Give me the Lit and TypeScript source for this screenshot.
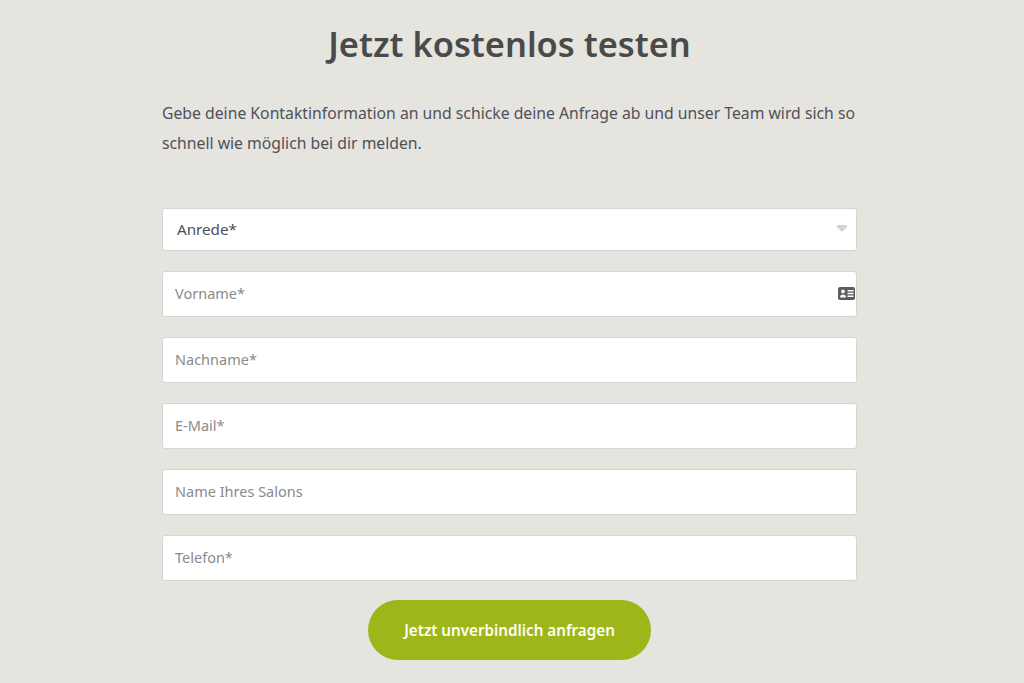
import { LitElement, html, css, svg } from 'lit'
import { customElement } from 'lit/decorators.js'

const FIELDS = ['Vorname*', 'Nachname*', 'E-Mail*', 'Name Ihres Salons', 'Telefon*']

const cardIcon = svg`<path fill="#5c5c5c" fill-rule="evenodd" d="M2 0h13a2 2 0 0 1 2 2v9a2 2 0 0 1-2 2H2a2 2 0 0 1-2-2V2a2 2 0 0 1 2-2ZM5 2.500a1.900 1.900 0 1 0 0 3.800 1.900 1.900 0 0 0 0-3.800ZM2 10.500h6c0-1.700-1.200-3-3-3s-3 1.300-3 3ZM9.500 3v1.500h6V3h-6Zm0 2.800v1.500h6V5.800h-6Zm0 2.800v1.500h6V8.600h-6Z"/>`

@customElement('app-root')
export class AppRoot extends LitElement {
  static styles = css`
    :host {
      display: block;
      min-height: 683px;
      background: #e5e4df;
      font-family: 'Noto Sans', 'Open Sans', sans-serif;
      overflow: hidden;
    }

    .page {
      width: 695px;
      margin-left: 162px;
      padding-top: 21px;
    }

    h1 {
      margin: 0;
      font-size: 34.400px;
      line-height: 46px;
      font-weight: 600;
      color: #4a4a4a;
      text-align: center;
      white-space: nowrap;
    }

    .intro {
      margin: 31px 0 0;
      font-size: 15.750px;
      line-height: 30px;
      color: #50505a;
      white-space: nowrap;
    }

    form {
      display: flex;
      flex-direction: column;
      margin-top: 50px;
    }

    .field {
      box-sizing: border-box;
      display: flex;
      align-items: center;
      justify-content: space-between;
      height: 46px;
      margin-bottom: 20px;
      padding: 0 1px 2px 12px;
      background: white;
      border: 1px solid #d6d6d2;
      border-radius: 3px;
      font-size: 14.500px;
      color: #8a8a8a;
    }

    .select {
      height: 43px;
      padding: 0 9px 2px 14px;
      font-size: 15.200px;
      color: #4c4f58;
    }

    .arrow {
      display: block;
      width: 10px;
      height: 7px;
    }

    .card {
      display: block;
      width: 17px;
      height: 13px;
    }

    button {
      align-self: center;
      width: 283px;
      height: 60px;
      margin-top: -1px;
      border: 0;
      border-radius: 30px;
      background: #9eb61a;
      color: #fdfdf4;
      font: 600 15.200px 'Noto Sans', 'Open Sans', sans-serif;
    }
  `

  render() {
    return html`
      <div class="page">
        <h1>Jetzt kostenlos testen</h1>
        <p class="intro">Gebe deine Kontaktinformation an und schicke deine Anfrage ab und unser Team wird sich so<br>schnell wie möglich bei dir melden.</p>
        <form>
          <div class="field select">
            <span>Anrede*</span>
            <svg class="arrow" viewBox="0 0 10 7"><path fill="#d2d2d2" d="M1.500 0h7C10 0 10.500 1.500 9.500 2.500L6 6c-.6.600-1.400.600-2 0L.5 2.500C-.5 1.500 0 0 1.500 0Z"/></svg>
          </div>
          ${FIELDS.map((f, i) => html`
            <div class="field">
              <span>${f}</span>
              ${i === 0 ? html`<svg class="card" viewBox="0 0 17 13">${cardIcon}</svg>` : ''}
            </div>
          `)}
          <button type="button">Jetzt unverbindlich anfragen</button>
        </form>
      </div>
    `
  }
}
